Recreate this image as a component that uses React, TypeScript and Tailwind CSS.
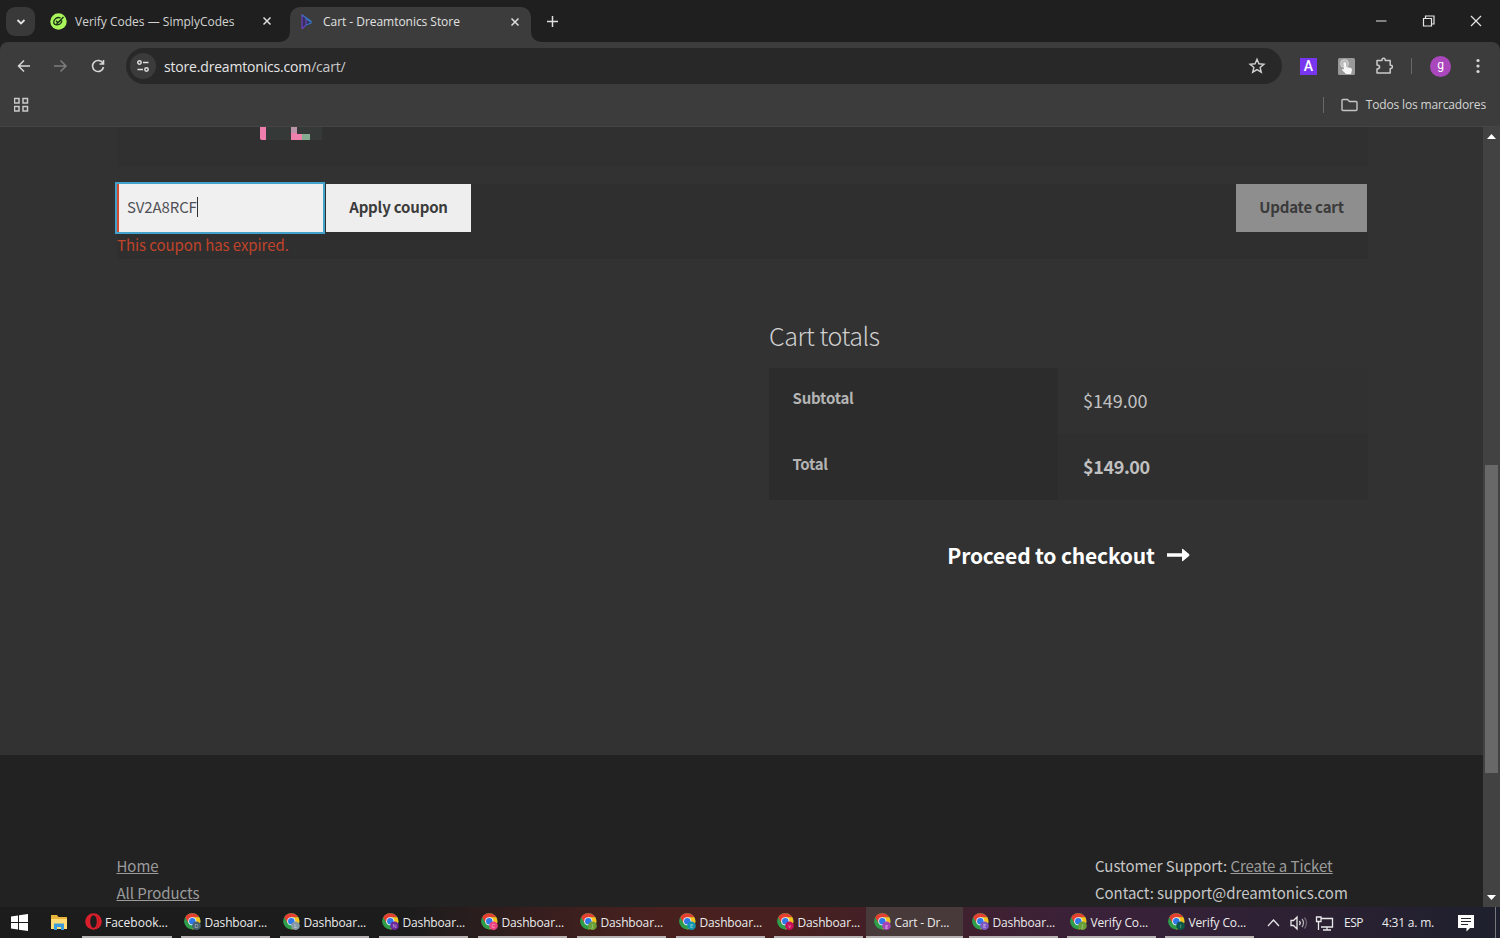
import React from 'react';

const UI = "font-['Open_Sans','Noto_Sans',sans-serif]";
const SITE = "font-['Noto_Sans_CJK_SC','Noto_Sans',sans-serif]";

function ChromeIcon({ badge, letter }: { badge: string; letter: string }) {
  return (
    <svg width="18" height="18" viewBox="0 0 18 18" className="shrink-0">
      <circle cx="8.3" cy="8.3" r="8.2" fill="#2f9e4b" />
      <path d="M8.300 4.200h7A8.200 8.200 0 0 0 1.200 4.200l3.500 6Z" fill="#e53f32" />
      <path d="M8.300 4.200h7A8.200 8.200 0 0 1 8.300 16.500l3.500-6Z" fill="#fbc31b" />
      <circle cx="8.3" cy="8.3" r="4.1" fill="#f3f5f9" />
      <circle cx="8.3" cy="8.3" r="3.2" fill="#2f78e8" />
      <circle cx="12.5" cy="12.7" r="4.3" fill={badge} />
      <text x="12.5" y="14.7" textAnchor="middle" fontSize="5.5" fontFamily="Open Sans" fill="#fff" opacity=".6">{letter}</text>
    </svg>
  );
}

function OperaIcon() {
  return (
    <svg width="17" height="17" viewBox="0 0 17 17" className="shrink-0">
      <ellipse cx="8.5" cy="8.5" rx="8.3" ry="8.3" fill="#d91f2b" />
      <path d="M11 2.500a8 8 0 0 1 0 12c4-2 4-10 0-12" fill="#a70e1b" />
      <ellipse cx="8.5" cy="8.5" rx="3.3" ry="6.3" fill="#1d1d1d" />
    </svg>
  );
}

const tasks = [
  { label: 'Dashboar...', badge: '#47606e', letter: 'D', width: 'w-[99px]' },
  { label: 'Dashboar...', badge: '#8799a5', letter: 'L', width: 'w-[99px]' },
  { label: 'Dashboar...', badge: '#69279b', letter: 'N', width: 'w-[99px]' },
  { label: 'Dashboar...', badge: '#ec4383', letter: 'C', width: 'w-[99px]' },
  { label: 'Dashboar...', badge: '#689f38', letter: 'J', width: 'w-[99px]' },
  { label: 'Dashboar...', badge: '#1294ad', letter: 'E', width: 'w-[98px]' },
  { label: 'Dashboar...', badge: '#c51159', letter: 'v', width: 'w-[92px]' },
  { label: 'Cart - Dr...', badge: '#a644b9', letter: 'g', width: 'w-[103px]', active: true },
  { label: 'Dashboar...', badge: '#7d57c1', letter: 'E', width: 'w-[98px]' },
  { label: 'Verify Co...', badge: '#689f38', letter: 'J', width: 'w-[98px]' },
  { label: 'Verify Co...', badge: '#0b5748', letter: 'i', width: 'w-[92px]' },
];

function Cross() {
  return (
    <svg width="10" height="10" viewBox="0 0 10 10">
      <path d="m1.500 1.500 7 7m0-7-7 7" stroke="#dedede" strokeWidth="1.500" />
    </svg>
  );
}

function TabStrip() {
  return (
    <div className="flex h-[42px] w-full bg-[#1f1f1f] pl-1.5">
      <div className="mt-[7px] flex h-[29px] w-[29px] items-center justify-center rounded-[9px] bg-[#393939]">
        <svg width="10" height="8" viewBox="0 0 10 8"><path d="m1.500 2 3.500 3.500L8.500 2" fill="none" stroke="#e4e4e4" strokeWidth="1.800" /></svg>
      </div>
      <div className="flex h-[42px] w-[255px] items-center pl-[15px]">
        <svg width="17" height="17" viewBox="0 0 17 17" className="shrink-0">
          <circle cx="8.500" cy="8.500" r="8.200" fill="#a9f65a" />
          <path d="M10.500 4.900C7 3.500 3.500 6.500 3.700 9.500c.4 3 5.800 3.200 7.500.2 1-1.400.8-1.600.3-2.300M6 7.800l1.800 2L13.500 4M6.500 11l4.500-4" fill="none" stroke="#183016" strokeWidth="1.300" />
        </svg>
        <span className="ml-2 w-[187px] pt-[2px] text-[12px] leading-[18px] text-[#d3d3d3]">Verify Codes — SimplyCodes</span>
        <Cross />
      </div>
      <div className="relative mt-[7px] flex h-[35px] w-[241px] items-center rounded-t-[10px] bg-[#3c3c3c] pb-[6px] pl-[11px]">
        <svg width="10" height="10" viewBox="0 0 10 10" className="absolute bottom-0 -left-[10px]"><path d="M10 0v10H0A10 10 0 0 0 10 0" fill="#3c3c3c" /></svg>
        <svg width="10" height="10" viewBox="0 0 10 10" className="absolute -right-[10px] bottom-0"><path d="M0 0v10h10A10 10 0 0 1 0 0" fill="#3c3c3c" /></svg>
        <svg width="12" height="16" viewBox="0 0 12 16" className="shrink-0">
          <path d="M1 1v14l9-6V7Z" fill="#33305c" />
          <path d="M1 15V1L5 4v7L1 15" fill="none" stroke="#6940b8" strokeWidth="1.300" />
          <path d="m1 1 9 6v2L5 11M10 8 5 5" fill="none" stroke="#3474bc" strokeWidth="1.200" />
        </svg>
        <span className="ml-[10px] w-[187px] pt-px text-[12px] leading-[18px] tracking-[-0.040px] text-[#e2e2e2]">Cart - Dreamtonics Store</span>
        <Cross />
      </div>
      <svg width="12" height="12" viewBox="0 0 12 12" className="mt-[15px] ml-[15px]"><path d="M6.500 1v11M1 6.500h11" stroke="#dedede" strokeWidth="1.500" /></svg>
      <svg width="106" height="12" viewBox="-4 0 106 12" className="mt-[15px] mr-[18px] ml-auto" fill="none" stroke="#e6e6e6" strokeWidth="1.200">
        <path d="M-4 6h10.500M91 1l10 10M101 1 91 11" />
        <path d="M43.500 3.500h8v7.500h-8Z" /><path d="M45.500 3.500V1h8.500v8h-2.500" />
      </svg>
    </div>
  );
}

function Toolbar() {
  return (
    <div className="w-full bg-[#1f1f1f]">
      <div className="h-[85px] rounded-t-[8px] border-b border-[#454545] bg-[#3c3c3c]">
        <div className="flex h-[48px] items-center pl-[16px]">
          <svg width="14" height="14" viewBox="0 0 14 14"><path d="M14 7H2.500M8 1.500 2.500 7 8 12.500" fill="none" stroke="#d6d6d6" strokeWidth="1.500" /></svg>
          <svg width="14" height="14" viewBox="0 0 14 14" className="ml-6"><path d="M0 7h12M6.500 1.500 12 7 6.500 12.500" fill="none" stroke="#7c7c7c" strokeWidth="1.500" /></svg>
          <svg width="14" height="14" viewBox="0 0 14 14" className="ml-[23px]"><path d="M12 4.500A5.500 5.500 0 1 0 12.500 8M12.500 1v4H8.500" fill="none" stroke="#d6d6d6" strokeWidth="1.600" /></svg>
          <div className="ml-[21px] flex h-[36px] w-[1156px] items-center rounded-full bg-[#282828] pr-[16px] pl-[4px]">
            <div className="flex size-[26px] shrink-0 items-center justify-center rounded-full bg-[#3b3b3b]">
              <svg width="14" height="14" viewBox="0 0 14 14" fill="none" stroke="#dedede" strokeWidth="1.500"><circle cx="3.500" cy="3.500" r="1.700" /><path d="M7 3.500h5.500M1.500 10.500H7" /><circle cx="10.500" cy="10.500" r="1.700" /></svg>
            </div>
            <span className="ml-[8px] pt-px text-[14px] leading-5 tracking-[-0.180px] text-[#e5e5e5]">store.dreamtonics.com<span className="text-[#c8c8c8]">/cart/</span></span>
            <svg width="18" height="18" viewBox="0 0 18 18" className="ml-auto"><path d="m9 2.300 1.900 4.500 5 .4-3.800 3.200 1.200 4.800L9 12.600l-4.300 2.600 1.200-4.800-3.800-3.200 5-.4Z" fill="none" stroke="#d0d0d0" strokeWidth="1.400" /></svg>
          </div>
          <div className="ml-[18px] flex size-[17px] items-center justify-center bg-[#7837ee] font-['Roboto',sans-serif] text-[14px] leading-[17px] font-medium text-white">A</div>
          <svg width="17" height="17" viewBox="0 0 17 17" className="ml-[21px]">
            <rect width="17" height="17" rx="1.500" fill="#999" /><circle cx="6.500" cy="5.500" r="4" fill="#bbb" stroke="#d0d0d0" />
            <path d="M5.500 5q1.500-1.500 2.500 0v4l5 1q1 .5 1 2l-1 4H8l-4-4q0-1.500 2-.8Z" fill="#f5f5f5" />
          </svg>
          <svg width="18" height="18" viewBox="0 0 18 18" className="ml-[20px]"><path d="M2 3.500H7v-.7a1.600 1.600 0 0 1 3.200 0v.7h5v4.700h.6a1.600 1.600 0 0 1 0 3.200h-.6V16H2v-4q2.600-.2 2.600-2T2 8Z" fill="none" stroke="#cacaca" strokeWidth="1.500" strokeLinejoin="round" /></svg>
          <div className="ml-[18px] h-4 w-px bg-[#686868]" />
          <div className="ml-[18px] flex size-[21px] items-center justify-center rounded-full bg-[#ab47bc] pb-[2px] font-['Roboto',sans-serif] text-[12px] leading-3 text-white">g</div>
          <svg width="4" height="16" viewBox="0 0 4 16" className="ml-[25px]" fill="#d8d8d8"><circle cx="2" cy="2.500" r="1.600" /><circle cx="2" cy="8" r="1.600" /><circle cx="2" cy="13.500" r="1.600" /></svg>
        </div>
        <div className="flex h-[30px] items-center pr-[14px] pl-[14px]">
          <svg width="16" height="16" viewBox="0 0 16 16" fill="none" stroke="#c9c9c9" strokeWidth="1.500"><path d="M0 1.500h4.500V6H0ZM8.500 1.500H13V6H8.500ZM0 9.500h4.500V14H0ZM8.500 9.500H13V14H8.500Z" transform="translate(.5)" /></svg>
          <div className="ml-auto h-4 w-px bg-[#686868]" />
          <svg width="18" height="14" viewBox="0 0 18 14" className="ml-[17px]"><path d="M1 11.500v-9q0-1 1-1h4.500l2 2H15q1 0 1 1v7q0 1-1 1H2q-1 0-1-1" fill="none" stroke="#c5c5c5" strokeWidth="1.400" /></svg>
          <span className="ml-[7px] text-[12px] leading-[18px] tracking-[-0.160px] text-[#d4d4d4]">Todos los marcadores</span>
        </div>
      </div>
    </div>
  );
}

function Page() {
  return (
    <div className={`${SITE} flex h-[780px] bg-[#323232]`}>
      <div className="flex min-w-0 flex-1 flex-col">
        <div className="flex h-[628px] flex-col pr-[115px] pl-[117px]">
          <div className="h-[40px] bg-[#303030] pl-[143px]">
            <svg width="62" height="13" viewBox="0 0 62 13"><path d="M0 0h62v13H0Z" fill="#353a39" /><path d="M0 0h6v13H2q-2 0-2-2Z" fill="#ef7eae" /><path d="M31 0h6v7h5v6H31Z" fill="#ee80ac" /><path d="M31 0h6v6h-6Z" fill="#bc94a8" /><path d="M42 7h8v6h-8Z" fill="#85ac91" /></svg>
          </div>
          <div className="mt-[17px] h-[75px] bg-[#2f2f2f]">
            <div className="flex h-[48px] pr-px">
              <div className="flex w-[206px] items-center border-l-2 border-[#d34a2c] bg-[#f0f0f0] pb-[2px] pl-2 text-[15px] leading-6 text-[#505258] outline-2 outline-[#42a2cb]">
                <span className="tracking-[-0.120px]">SV2A8RCF</span><span className="h-5 w-px bg-[#333]" />
              </div>
              <div className="ml-[3px] flex w-[145px] items-center justify-center bg-[#eeeeee] pb-[2px] text-[15px] leading-6 font-bold tracking-[-0.180px] text-[#3b3b3b]">Apply coupon</div>
              <div className="ml-auto flex w-[131px] items-center justify-center bg-[#8e8e8e] pb-[2px] text-[15px] leading-6 font-bold tracking-[-0.200px] text-[#3a3a3a]">Update cart</div>
            </div>
            <div className="text-[15px] leading-[26px] tracking-[-0.070px] text-[#c0432a]">This coupon has expired.</div>
          </div>
          <div className="mt-[56px] ml-[652px]">
            <h2 className="h-[53px] text-[25px] leading-[40px] font-light tracking-[-0.430px] text-[#d0d0d0]">Cart totals</h2>
            <div className="grid grid-cols-[289px_1fr] grid-rows-[66px_66px] text-[#c1c1c1]">
              <div className="bg-[#2c2c2c] pt-[18px] pl-[23.500px] text-[15px] leading-6 font-bold tracking-[-0.200px] text-[#b4b4b4]">Subtotal</div>
              <div className="bg-[#313131] pt-[20px] pl-[25px] text-[18px] leading-6 tracking-[-0.080px]">$149.00</div>
              <div className="bg-[#2c2c2c] pt-[18px] pl-[23.500px] text-[15px] leading-6 font-bold tracking-[-0.300px] text-[#b4b4b4]">Total</div>
              <div className="bg-[#2f2f2f] pt-[20px] pl-[25px] text-[18px] leading-6 font-bold tracking-[-0.400px]">$149.00</div>
            </div>
            <div className="mt-[35px] flex h-[40px] items-center justify-center text-[21px] leading-[40px] font-bold tracking-[-0.180px] text-white">
              <span>Proceed to checkout</span>
              <svg width="23" height="14" viewBox="0 0 23 14" className="ml-3"><path d="M0 5.300h15V1.500q0-1 1-.5l6 5q1 1 0 2l-6 5q-1 .5-1-.5V8.700H0Z" fill="#fff" /></svg>
            </div>
          </div>
        </div>
        <div className="flex flex-1 justify-between bg-[#222222] pt-[97px] pr-[136px] pl-[116.500px] text-[15px] leading-[27px] text-[#c6c6c6]">
          <div className="tracking-[-0.060px] text-[#9b9b9b]"><div className="underline">Home</div><div className="underline">All Products</div></div>
          <div className="w-[252px] whitespace-nowrap tracking-[-0.040px]"><div>Customer Support: <span className="text-[#9b9b9b] underline">Create a Ticket</span></div><div>Contact: support@dreamtonics.com</div></div>
        </div>
      </div>
      <div className="flex w-[17px] flex-col items-center bg-[#424242] pt-[7px] pb-[7px]">
        <svg width="9" height="5" viewBox="0 0 9 5"><path d="m0 5 4.500-5L9 5" fill="#fff" /></svg>
        <div className="mt-[326px] h-[308px] w-[13px] bg-[#686868]" />
        <svg width="9" height="5" viewBox="0 0 9 5" className="mt-auto"><path d="m0 0 4.500 5L9 0" fill="#fff" /></svg>
      </div>
    </div>
  );
}

function Tray() {
  return (
    <div className="flex flex-1 items-center">
      <svg width="68" height="18" viewBox="0 0 68 18" fill="none" stroke="#e9e9e9" strokeWidth="1.300" className="ml-[10px] shrink-0">
        <path d="m1 12 5.500-6 5.500 6M24 6.500h2.500L30 3v12l-3.500-3.500H24Z" /><path d="M32.500 7q1.500 2 0 4" /><path d="M35 5q3 4 0 8" opacity=".7" /><path d="M37.500 3.500q4 5.500 0 11" opacity=".35" />
        <path d="M54 4.500h11.500v8.500H54M60 13v3M56 16h8M49.500 3h4.500v4.500h-4.500ZM51.500 8v8" />
      </svg>
      <span className="ml-[9px] w-[38px] tracking-[-0.500px]">ESP</span>
      <span className="w-[75px] whitespace-nowrap tracking-[-0.200px]">4:31 a. m.</span>
      <svg width="18" height="18" viewBox="0 0 18 18" className="shrink-0"><path d="M1 1h16v13h-4l-3.500 3.500V14H1Z" fill="#fff" /><path d="M4 4.500h10M4 7.500h10M4 10.500h7" stroke="#252432" strokeWidth="1.200" /></svg>
      <div className="ml-auto mr-1 h-full w-px bg-[#77777d]" />
    </div>
  );
}

function Taskbar() {
  return (
    <div className="flex h-[31px] bg-linear-[to_right,#1c1c1d_0%,#1c1c1d_27%,#371e1e_36%,#48211f_44%,#47201f_53%,#40202c_62%,#3a213a_73%,#302135_83%,#1e202d_100%] text-[12px] leading-[18px] text-[#ececec]">
      <div className="flex w-[82px] shrink-0 items-center pl-[11px]">
        <svg width="17" height="17" viewBox="0 0 17 17"><path d="m0 2.500 7-1V8H0ZM8 1.300 17 0v8H8ZM0 9h7v6.500l-7-1ZM8 9h9v8l-9-1.300Z" fill="#fff" /></svg>
        <svg width="18" height="17" viewBox="0 0 18 17" className="ml-[22px]"><path d="M1 1h6l1.500 2H17v12H1Z" fill="#e8b53d" /><path d="M1 5h16v10H1Z" fill="#ffdc75" /><path d="M4 16V9.500h10V16h-3v-3H7v3Z" fill="#3c9ddd" /></svg>
      </div>
      <div className="w-[99px] shrink-0"><div className="flex h-full w-[90px] items-center border-b-2 border-[#b5b5b5] pl-[3px]"><OperaIcon /><span className="ml-[3px] pt-[2px] whitespace-nowrap">Facebook...</span></div></div>
      {tasks.map((t, i) => (
        <div key={i} className={`${t.width} shrink-0`}>
          <div className={`flex h-full items-center border-b-2 border-[#b9b2b2] ${t.active ? 'w-[97px] bg-[#48393a] pl-[8px]' : 'w-[89px] pl-[3px]'}`}><ChromeIcon badge={t.badge} letter={t.letter} /><span className="ml-[2.500px] pt-[2px] tracking-[-0.150px] whitespace-nowrap">{t.label}</span></div>
        </div>
      ))}
      <Tray />
    </div>
  );
}

export default function App() {
  return (
    <div className={`${UI} h-[938px] w-[1500px] overflow-hidden`}>
      <TabStrip />
      <Toolbar />
      <Page />
      <Taskbar />
    </div>
  );
}
